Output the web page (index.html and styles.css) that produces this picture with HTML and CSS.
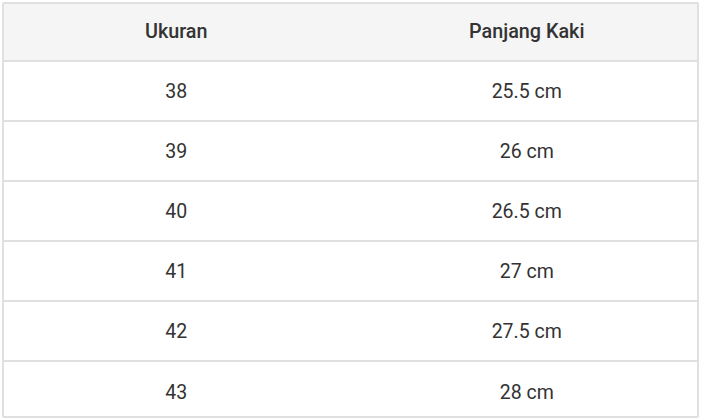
FILE: index.html
```html
<!DOCTYPE html>
<html lang="id">
<head>
<meta charset="utf-8">
<link rel="stylesheet" href="styles.css">
</head>
<body>
<div class="size-table">
  <div class="row head">
    <div class="cell">Ukuran</div>
    <div class="cell">Panjang Kaki</div>
  </div>
  <div class="row">
    <div class="cell">38</div>
    <div class="cell">25.5 cm</div>
  </div>
  <div class="row">
    <div class="cell">39</div>
    <div class="cell">26 cm</div>
  </div>
  <div class="row">
    <div class="cell">40</div>
    <div class="cell">26.5 cm</div>
  </div>
  <div class="row">
    <div class="cell">41</div>
    <div class="cell">27 cm</div>
  </div>
  <div class="row">
    <div class="cell">42</div>
    <div class="cell">27.5 cm</div>
  </div>
  <div class="row last">
    <div class="cell">43</div>
    <div class="cell">28 cm</div>
  </div>
</div>
</body>
</html>
```

FILE: styles.css
```css
html, body {
  margin: 0;
  padding: 0;
  background: #ffffff;
}
body {
  font-family: Roboto, "Liberation Sans", sans-serif;
  color: #333333;
}
.size-table {
  margin: 2px 0 0 2px;
  width: 697px;
  border: 2px solid #e0e0e0;
  border-radius: 2px;
  box-sizing: border-box;
  display: flex;
  flex-direction: column;
}
.row {
  display: grid;
  grid-template-columns: 1fr 1fr;
  height: 60px;
  border-bottom: 2px solid #e0e0e0;
  box-sizing: border-box;
}
.row.head {
  height: 58px;
  background: #f5f5f5;
  font-weight: 500;
}
.row.head .cell {
  font-size: 19.8px;
  padding-bottom: 2px;
}
.row.last {
  height: 54px;
  border-bottom: none;
}
.row.last .cell {
  padding-top: 6px;
}
.cell {
  display: flex;
  align-items: center;
  justify-content: center;
  font-size: 19.5px;
}
.cell:first-child {
  padding-right: 2px;
}
.cell:last-child {
  padding-left: 6px;
}
```
